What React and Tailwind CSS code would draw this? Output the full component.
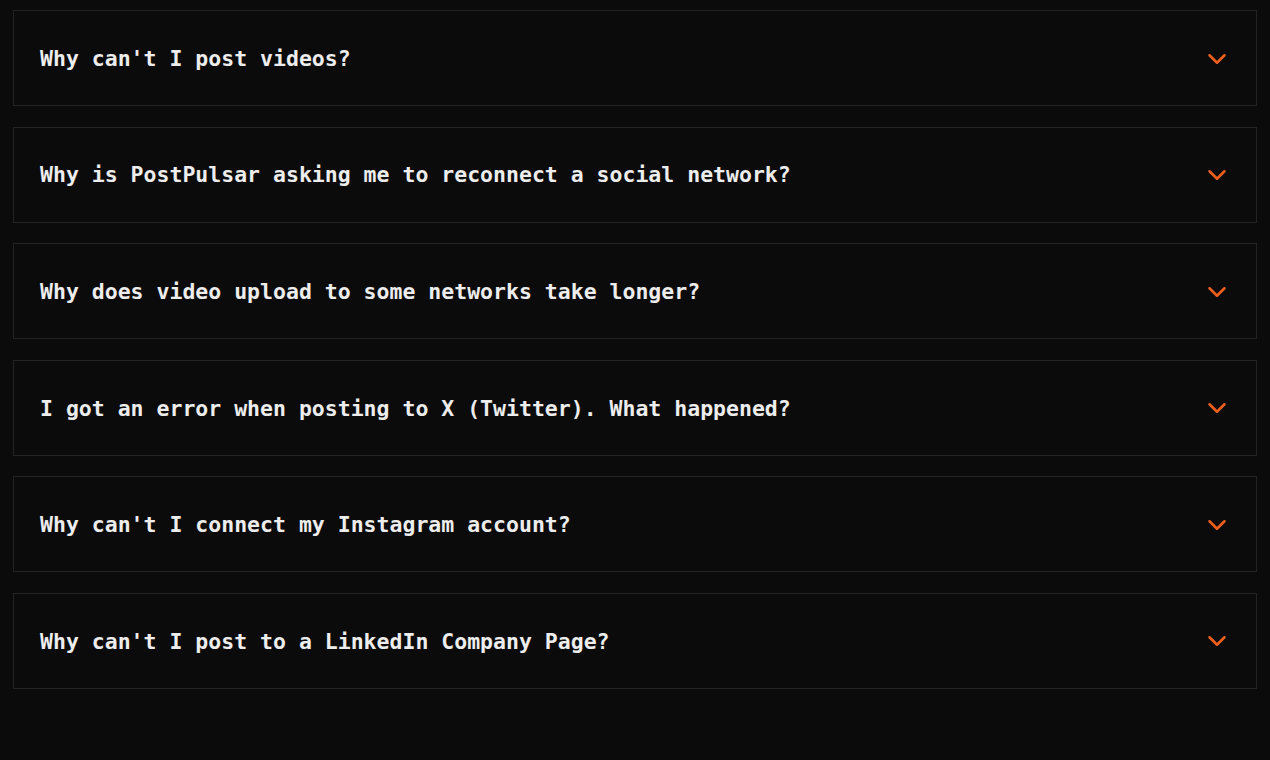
import React, { useState } from "react";
import { ChevronDown } from "lucide-react";

const faqs = [
  "Why can't I post videos?",
  "Why is PostPulsar asking me to reconnect a social network?",
  "Why does video upload to some networks take longer?",
  "I got an error when posting to X (Twitter). What happened?",
  "Why can't I connect my Instagram account?",
  "Why can't I post to a LinkedIn Company Page?",
];

const FaqItem = ({ question }) => {
  const [open, setOpen] = useState(false);

  return (
    <div className="border border-[#232323] bg-[#0b0b0b]">
      <button
        onClick={() => setOpen(!open)}
        className="flex h-[94px] w-full items-center justify-between pl-[26px] pr-[24px] text-left"
      >
        <span className="mt-[2px] font-['DejaVu_Sans_Mono',monospace] text-[21.5px] font-bold text-[#ededed]">
          {question}
        </span>
        <ChevronDown size={30} strokeWidth={2} className="mt-[1px] text-[#f0601c]" />
      </button>
    </div>
  );
};

export default function App() {
  return (
    <div className="min-h-[760px] w-full bg-[#0b0b0b] px-[13px] pt-[10px]">
      <div className="flex flex-col gap-[20.6px]">
        {faqs.map((q) => (
          <FaqItem key={q} question={q} />
        ))}
      </div>
    </div>
  );
}
